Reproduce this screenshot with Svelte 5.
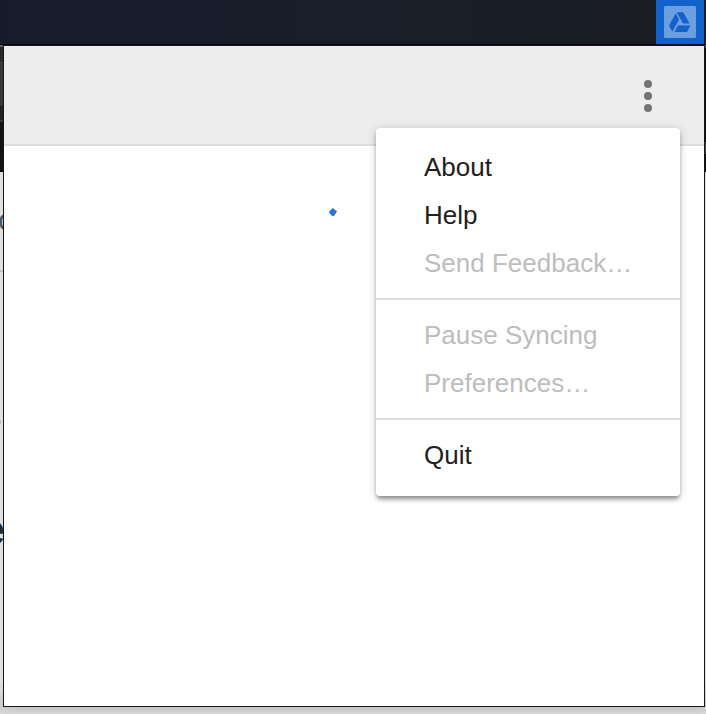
<script>
  const groups = [
    [
      { label: 'About', enabled: true },
      { label: 'Help', enabled: true },
      { label: 'Send Feedback…', enabled: false }
    ],
    [
      { label: 'Pause Syncing', enabled: false },
      { label: 'Preferences…', enabled: false }
    ],
    [{ label: 'Quit', enabled: true }]
  ];
</script>

<main class="desktop">
  <div class="behind left" aria-hidden="true">
    <i class="speck"></i>
    <i class="rule"></i>
    <span class="letter small">c</span>
    <span class="letter big">e</span>
  </div>
  <div class="behind right" aria-hidden="true"></div>

  <header class="menubar">
    <button class="tray" aria-label="Drive">
      <svg width="48" height="44" viewBox="0 0 48 44">
        <rect x="8" y="6" width="32" height="32" rx="1.5" fill="#6c9fdf" />
        <path
          fill="#1262cb"
          d="M20.6 12.2h6.6l6.5 11.3h-6.6zM19.6 13.6l3.5 5.9-6.7 12.3-3.5-6zM21.9 25.4h12.5l-3.4 6.6H18.6z"
        />
      </svg>
    </button>
  </header>

  <section class="window">
    <div class="toolbar">
      <button class="more" aria-label="More options"><i></i><i></i><i></i></button>
    </div>
    <div class="content">
      <svg class="spinner" width="10" height="10" viewBox="0 0 10 10">
        <path d="M4.7 1.1L9 4.3 6.1 9.1 3.6 8.7.8 5.1z" fill="#2b78d0" />
      </svg>
    </div>
  </section>

  <nav class="menu">
    {#each groups as group}
      <ul>
        {#each group as item}
          <li class:disabled={!item.enabled}>{item.label}</li>
        {/each}
      </ul>
    {/each}
  </nav>
</main>

<style>
  .desktop {
    position: relative;
    box-sizing: border-box;
    width: 706px;
    height: 714px;
    overflow: hidden;
    background: linear-gradient(#e4e4e2 680px, #cfcfcf 707px, #dadada 714px);
    font-family: "Liberation Sans", Arial, sans-serif;
  }
  .menubar {
    display: flex;
    justify-content: flex-end;
    box-sizing: border-box;
    height: 45px;
    padding-right: 2px;
    border-bottom: 1px solid #03060f;
    background: linear-gradient(90deg, #161c2c, #191e2a 50%, #1a1d23);
    position: relative;
  }
  button {
    padding: 0;
    border: 0;
    background: none;
  }
  .tray {
    width: 48px;
    height: 44px;
    background: #1262cb;
  }
  .tray svg {
    display: block;
  }
  .window {
    position: relative;
    box-sizing: border-box;
    width: 702px;
    height: 662px;
    margin-left: 3px;
    border: 1px solid #17181a;
    background: #fff;
    box-shadow: 0 4px 10px rgba(0, 0, 0, 0.06);
    display: flex;
    flex-direction: column;
  }
  .toolbar {
    display: flex;
    justify-content: flex-end;
    box-sizing: border-box;
    height: 100px;
    padding: 34px 52px 0 0;
    border-bottom: 2px solid #dedede;
    background: linear-gradient(#f4eaf6, #ededed 5px);
  }
  .more {
    display: flex;
    flex-direction: column;
    gap: 4px;
    width: 8px;
    height: 32px;
  }
  .more i {
    width: 8px;
    height: 8px;
    border-radius: 50%;
    background: #757575;
  }
  .content {
    flex: 1;
    padding: 61px 0 0 324px;
  }
  .spinner {
    display: block;
  }
  .menu {
    position: absolute;
    left: 376px;
    top: 128px;
    box-sizing: border-box;
    width: 304px;
    height: 368px;
    padding: 4px 0;
    border-radius: 4px;
    background: #fff;
    box-shadow: 0 4px 4px -1px rgba(0, 0, 0, 0.38), 0 1px 10px rgba(0, 0, 0, 0.18);
  }
  ul {
    margin: 0;
    padding: 12px 0 10px;
    list-style: none;
  }
  ul + ul {
    border-top: 2px solid #dedede;
  }
  li {
    height: 48px;
    padding-left: 48px;
    font-size: 26px;
    line-height: 47px;
    color: #212121;
    white-space: nowrap;
  }
  .disabled {
    color: #bdbdbd;
  }
  .behind {
    position: absolute;
    top: 45px;
  }
  .left {
    left: 0;
    width: 4px;
    height: 655px;
    overflow: hidden;
    background: linear-gradient(#666 0 2px, #292929 2px 17px, #484848 17px 18px, #383838 18px 61px, #222 61px 75px, #393939 75px 77px, #151510 77px 126px, #050505 126px 127px, transparent 127px);
  }
  .right {
    right: 0;
    width: 1px;
    height: 127px;
    background: linear-gradient(#555 0 3px, #050606 3px 97px, #444 97px 109px, #080909 109px);
  }
  .behind i {
    position: absolute;
    left: 0;
    width: 4px;
  }
  .left .rule {
    top: 225px;
    height: 2px;
    background: #c8c8c6;
  }
  .left .speck {
    top: 375px;
    width: 1px;
    height: 4px;
    background: #b5c4ce;
  }
  .letter {
    position: absolute;
    line-height: 1;
    opacity: 0.99;
  }
  .small {
    left: -2px;
    top: 160px;
    font-size: 30px;
    color: #4d5960;
  }
  .big {
    right: -1px;
    top: 462px;
    font-size: 45px;
    font-weight: bold;
    color: #202a30;
  }
</style>
